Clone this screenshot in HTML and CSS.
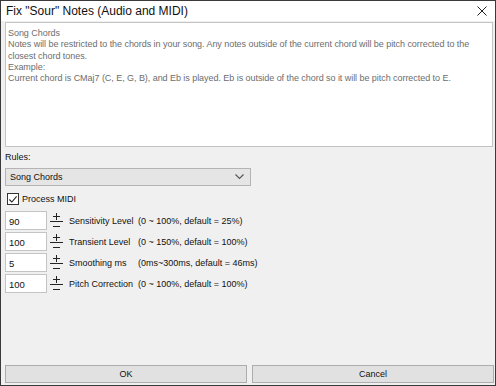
FILE: index.html
```html
<!DOCTYPE html>
<html lang="en">
<head>
    <meta charset="UTF-8">
    <title>Fix "Sour" Notes (Audio and MIDI)</title>
    <link rel="stylesheet" href="styles.css">
</head>
<body>
    <div class="window">
        <div class="titlebar">
            <span class="title">Fix "Sour" Notes (Audio and MIDI)</span>
            <svg class="close" width="10" height="10" viewBox="0 0 10 10">
                <path d="M0.5 0.5 L9.5 9.5 M9.5 0.5 L0.5 9.5" stroke="#222" stroke-width="1" fill="none"/>
            </svg>
        </div>

        <div class="dialog-body">
            <div class="description">
                <div>Song Chords</div>
                <div>Notes will be restricted to the chords in your song. Any notes outside of the current chord will be pitch corrected to the closest chord tones.</div>
                <div>Example:</div>
                <div>Current chord is CMaj7 (C, E, G, B), and Eb is played. Eb is outside of the chord so it will be pitch corrected to E.</div>
            </div>

            <div class="rules-label">Rules:</div>
            <div class="select">
                <span>Song Chords</span>
                <svg width="9" height="6" viewBox="0 0 9 6">
                    <path d="M0.5 0.5 L4.5 4.5 L8.5 0.5" stroke="#555" stroke-width="1.1" fill="none"/>
                </svg>
            </div>

            <div class="check">
                <span class="checkbox">
                    <svg width="11" height="11" viewBox="0 0 11 11">
                        <path d="M1.5 5.5 L4.2 8.3 L9.5 2" stroke="#222" stroke-width="1.2" fill="none"/>
                    </svg>
                </span>
                <span>Process MIDI</span>
            </div>

            <div class="params">
                <div class="param">
                    <div class="num-box">90</div>
                    <svg class="spin" width="17" height="19" viewBox="0 0 17 19">
                        <path d="M8.5 2 V9 M5 5.5 H12 M2 10.5 H15 M5 15.5 H12" stroke="#222" stroke-width="1" fill="none"/>
                    </svg>
                    <span class="param-name">Sensitivity Level</span>
                    <span class="param-range">(0 ~ 100%, default = 25%)</span>
                </div>
                <div class="param">
                    <div class="num-box">100</div>
                    <svg class="spin" width="17" height="19" viewBox="0 0 17 19">
                        <path d="M8.5 2 V9 M5 5.5 H12 M2 10.5 H15 M5 15.5 H12" stroke="#222" stroke-width="1" fill="none"/>
                    </svg>
                    <span class="param-name">Transient Level</span>
                    <span class="param-range">(0 ~ 150%, default = 100%)</span>
                </div>
                <div class="param">
                    <div class="num-box">5</div>
                    <svg class="spin" width="17" height="19" viewBox="0 0 17 19">
                        <path d="M8.5 2 V9 M5 5.5 H12 M2 10.5 H15 M5 15.5 H12" stroke="#222" stroke-width="1" fill="none"/>
                    </svg>
                    <span class="param-name">Smoothing ms</span>
                    <span class="param-range">(0ms~300ms, default = 46ms)</span>
                </div>
                <div class="param">
                    <div class="num-box">100</div>
                    <svg class="spin" width="17" height="19" viewBox="0 0 17 19">
                        <path d="M8.5 2 V9 M5 5.5 H12 M2 10.5 H15 M5 15.5 H12" stroke="#222" stroke-width="1" fill="none"/>
                    </svg>
                    <span class="param-name">Pitch Correction</span>
                    <span class="param-range">(0 ~ 100%, default = 100%)</span>
                </div>
            </div>

            <div class="buttons">
                <button class="btn">OK</button>
                <button class="btn">Cancel</button>
            </div>
        </div>
    </div>
</body>
</html>
```

FILE: styles.css
```css
* {
    margin: 0;
    padding: 0;
    box-sizing: border-box;
}

body {
    font-family: 'Liberation Sans', Arial, sans-serif;
    font-size: 9px;
    color: #111;
    background: #fff;
}

.window {
    width: 496px;
    height: 386px;
    border: 1px solid #3a3a3a;
    display: flex;
    flex-direction: column;
    background: #f0f0f0;
}

.titlebar {
    height: 20px;
    background: #fff;
    display: flex;
    align-items: center;
    justify-content: space-between;
    padding: 0 8px 0 5px;
}

.title {
    font-size: 12px;
    color: #111;
}

.dialog-body {
    flex: 1;
    display: flex;
    flex-direction: column;
    padding: 1px 1px 2px 4px;
}

.description {
    height: 125px;
    background: #fff;
    border: 1px solid #c4c4c4;
    padding: 5px 2px;
    color: #6d6d6d;
    line-height: 11.3px;
    letter-spacing: -0.05px;
    margin-right: 1px;
}

.rules-label {
    margin-top: 5px;
    height: 11px;
    line-height: 11px;
}

.select {
    margin-top: 5px;
    width: 246px;
    height: 18px;
    background: #e5e5e5;
    border: 1px solid #b4b4b4;
    display: flex;
    align-items: center;
    justify-content: space-between;
    padding: 0 6px 0 4px;
}

.check {
    margin-top: 7px;
    display: flex;
    align-items: center;
    gap: 3px;
    padding-left: 2px;
    height: 12px;
}

.checkbox {
    width: 12px;
    height: 12px;
    border: 1px solid #333;
    background: #fff;
    display: flex;
    align-items: center;
    justify-content: center;
}

.params {
    margin-top: 6px;
    display: flex;
    flex-direction: column;
    gap: 2px;
}

.param {
    display: flex;
    align-items: center;
    height: 19px;
}

.num-box {
    width: 42px;
    height: 19px;
    background: #fff;
    border: 1px solid #c4c4c4;
    line-height: 19px;
    padding-left: 3px;
    font-size: 9.5px;
}

.spin {
    margin-left: 1px;
    flex-shrink: 0;
}

.param-name {
    margin-left: 4px;
    width: 69px;
}

.param-range {
    white-space: nowrap;
}

.buttons {
    margin-top: auto;
    display: flex;
    gap: 5px;
}

.btn {
    flex: 1;
    height: 18px;
    background: #e1e1e1;
    border: 1px solid #adadad;
    font-family: 'Liberation Sans', Arial, sans-serif;
    font-size: 9px;
    color: #111;
}
```
